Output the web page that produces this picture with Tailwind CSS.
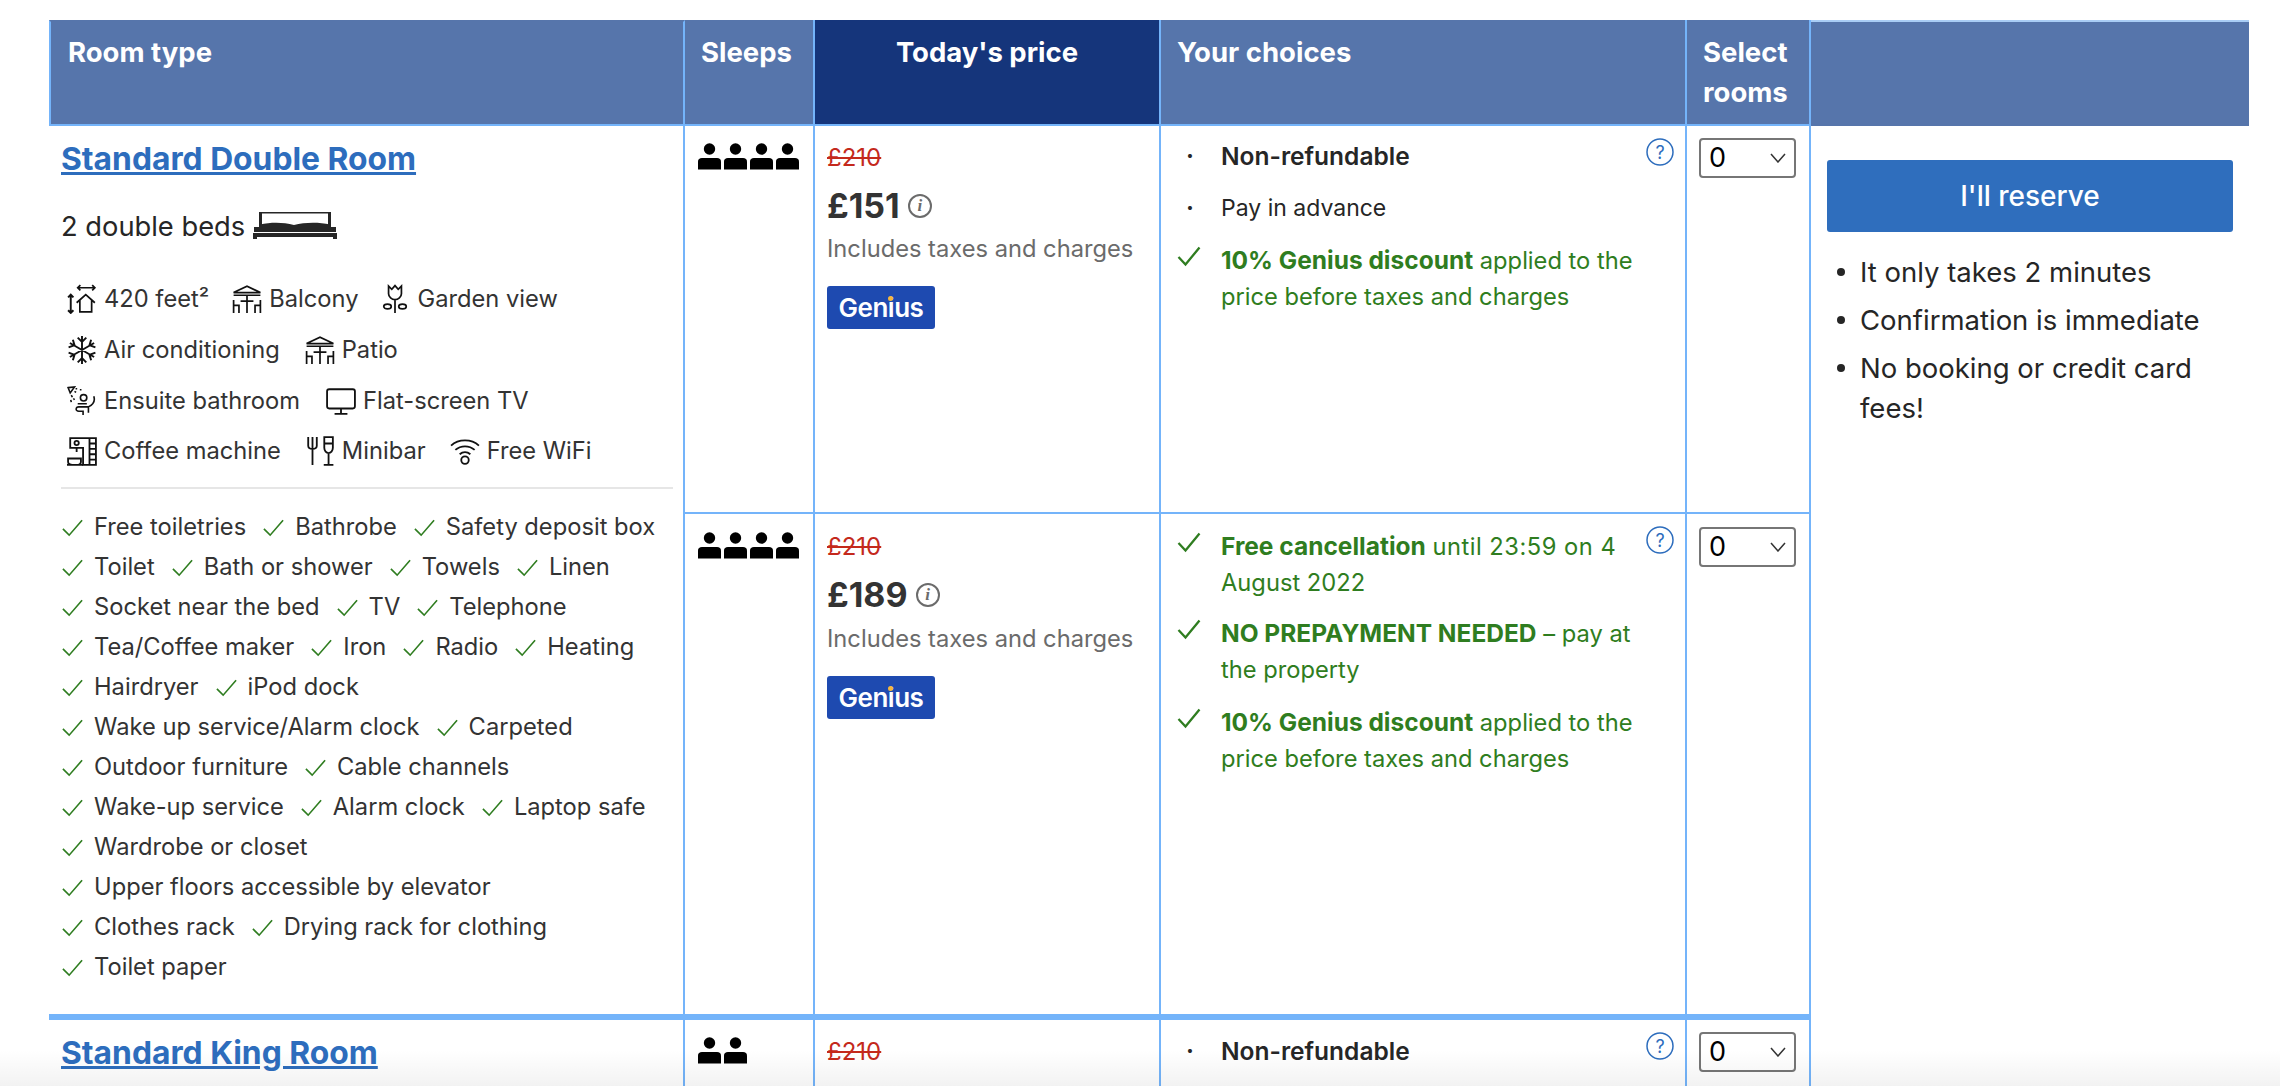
<!doctype html>
<html lang="en">
<head>
<meta charset="utf-8">
<title>Rooms</title>
<script src="https://cdn.jsdelivr.net/npm/@tailwindcss/browser@4"></script>
</head>
<body class="bg-white">
<svg width="0" height="0" class="absolute">
  <defs>
    <symbol id="check" viewBox="0 0 24 24"><path d="M2 13.5 L8.5 20 L22 4.5" fill="none" stroke="currentColor" stroke-width="1.7"/></symbol>
    <symbol id="check-b" viewBox="0 0 24 24"><path d="M1.500 13 L8.500 20.500 L22.500 3.500" fill="none" stroke="currentColor" stroke-width="2.300"/></symbol>
    <symbol id="person" viewBox="0 0 23 27"><circle cx="11.5" cy="6" r="5.7" fill="currentColor"/><path d="M0 18.5C0 16.5 1.5 15 4 15H19C21.5 15 23 16.5 23 18.5V26.5H0Z" fill="currentColor"/></symbol>
    <symbol id="size" viewBox="0 0 28 28" fill="none" stroke="#111" stroke-width="1.6"><path d="M10 3.5H26M12.500 1 10 3.500 12.500 6M23.500 1 26 3.500 23.500 6"/><path d="M3.500 10V27M1 12.500 3.500 10 6 12.500M1 24.500 3.500 27 6 24.500" stroke-width="1.800"/><path d="M9 17.500 17.500 10 26 17.500M12 15.500V26H23V15.500"/></symbol>
    <symbol id="patio" viewBox="0 0 28 28" fill="none" stroke="#111" stroke-width="1.600"><path d="M1.500 8 14 2 26.500 8ZM1.500 10.500H26.500M14 10.500V27M8 16H20M1.500 15V27M1.500 20H6.500V27M26.500 15V27M26.500 20H21.500V27"/></symbol>
    <symbol id="flower" viewBox="0 0 24 28" fill="none" stroke="#111" stroke-width="1.600"><path d="M6 2 9 5 12 1.500 15 5 18 2V9C18 12 15 14.500 12 14.500S6 12 6 9ZM12 14.500V27"/><ellipse cx="5" cy="21" rx="3.500" ry="2.200"/><ellipse cx="19" cy="21" rx="3.500" ry="2.200"/></symbol>
    <symbol id="snow" viewBox="0 0 28 28" fill="none" stroke="#111" stroke-width="1.800"><path d="M14 1V27M2.700 7.500 25.300 20.500M25.300 7.500 2.700 20.500M10 2.500 14 6.500 18 2.500M10 25.500 14 21.500 18 25.500M1.500 11.500 7 9.500 5.500 4.500M26.500 11.500 21 9.500 22.500 4.500M1.500 16.500 7 18.500 5.500 23.500M26.500 16.500 21 18.500 22.500 23.500"/></symbol>
    <symbol id="shower" viewBox="0 0 28 28" fill="none" stroke="#111" stroke-width="1.500"><path d="M1 1.500 7 1 3 6.500Z"/><path d="M8 2.500H9.500M12 3.500H13.500M7 5 8.500 6M4 8.500 5 10.500M3.500 13 4 15M6 11.500 7 13"/><circle cx="15.500" cy="11" r="3"/><path d="M25 9.500C26.500 14 24 17.500 20 19.500V25M20 19.500H11C8 19.500 7.500 23.500 11 23.500H15V27M10 16.500H18.500"/></symbol>
    <symbol id="tv" viewBox="0 0 28 28" fill="none" stroke="#111" stroke-width="1.700"><rect x="1" y="3" width="26" height="18" rx="2"/><path d="M14 21V26M8 26H20"/></symbol>
    <symbol id="coffee" viewBox="0 0 28 28" fill="none" stroke="#111" stroke-width="1.700"><path d="M3 2H27V27H15V11H3ZM3 2V11M21 7H27M21 12H27M21 17H27M21 22H27M21 2V27"/><circle cx="9" cy="6.500" r="2"/><path d="M9 11V15M1 21H13V24C13 26 11 27 9 27H5C3 27 1 26 1 24Z M0 27H15"/></symbol>
    <symbol id="minibar" viewBox="0 0 28 28" fill="none" stroke="#111" stroke-width="1.700"><path d="M3 1V9C3 11 5 12 7 12V27M7 1V12M11 1V9C11 11 9 12 7 12"/><path d="M18 1H26V11C26 14 24 16 22 16S18 14 18 11ZM18 7H26M22 16V27M17.500 27H26.500"/></symbol>
    <symbol id="wifi" viewBox="0 0 28 28" fill="none" stroke="#111" stroke-width="1.700"><path d="M1 9C8 2.500 20 2.500 27 9M5 13C10 8.500 18 8.500 23 13M9 17C12 14.500 16 14.500 19 17"/><circle cx="14" cy="22.500" r="3.500"/></symbol>
    <symbol id="bed" viewBox="0 0 84 28"><path d="M6 1H78V2.500H6ZM6 1H9V16H6ZM75 1H78V16H75Z" fill="#262626"/><path d="M7 13.500C18 11 30 11 41 14C52 11 66 11 77 13.500V18H7Z" fill="#262626"/><path d="M1 16H83V21H1Z" fill="#262626"/><path d="M0 22H84V28H80V26H4V28H0Z" fill="#262626"/></symbol>
  </defs>
</svg>

<div class="relative h-[1086px] overflow-hidden pt-[20px] pl-[49px] font-['Inter',sans-serif] text-[#262626] text-[23.700px] leading-[36px]">
  <table class="w-[2200px] table-fixed border-separate border-spacing-0">
    <colgroup>
      <col class="w-[636px]"><col class="w-[130px]"><col class="w-[346px]"><col class="w-[526px]"><col class="w-[124px]"><col class="w-[438px]">
    </colgroup>
    <thead>
      <tr class="h-[106px] text-white text-[27.500px] leading-[40px] font-bold text-left align-top">
        <th class="bg-[#5675ab] border-l-2 border-r-2 border-b-2 border-t-2 border-[#74b4fa] border-t-[#5675ab] pl-[17px] pt-[10px] font-bold">Room type</th>
        <th class="bg-[#5675ab] border-r-2 border-b-2 border-[#74b4fa] pl-[16px] pt-[12px] font-bold">Sleeps</th>
        <th class="bg-[#15357b] border-r-2 border-b-2 border-[#74b4fa] text-center pt-[12px] font-bold">Today's price</th>
        <th class="bg-[#5675ab] border-r-2 border-b-2 border-[#74b4fa] pl-[16px] pt-[12px] font-bold">Your choices</th>
        <th class="bg-[#5675ab] border-r-2 border-b-2 border-[#74b4fa] pl-[16px] pt-[12px] font-bold">Select rooms</th>
        <th class="bg-[#5675ab] border-t-2 border-[#a9cdf5]"></th>
      </tr>
    </thead>
    <tbody class="align-top">
      <tr class="h-[388px]">
        <td rowspan="2" class="border-r-2 border-[#74b4fa] pl-[12px] pr-[10px] pt-[15px]">
          <a href="#" class="block text-[31.800px] leading-[36px] font-bold text-[#2d6dbd] underline">Standard Double Room</a>
          <div class="mt-[30px] flex items-center gap-[8px] text-[27.300px] leading-[40px] pb-[2px]">
            <span>2 double beds</span>
            <svg class="w-[84px] h-[28px] -mt-[5px]"><use href="#bed"/></svg>
          </div>
          <div class="mt-[30px] flex flex-col gap-[10.800px] pl-[6px] text-[#333] leading-[40px]">
            <div class="flex gap-[23px]">
              <span class="flex items-center gap-[7px]"><svg class="w-[30px] h-[30px]"><use href="#size"/></svg>420 feet²</span>
              <span class="flex items-center gap-[7px]"><svg class="w-[30px] h-[30px]"><use href="#patio"/></svg>Balcony</span>
              <span class="flex items-center gap-[10px]"><svg class="w-[26px] h-[30px]"><use href="#flower"/></svg>Garden view</span>
            </div>
            <div class="flex gap-[25px]">
              <span class="flex items-center gap-[7px]"><svg class="w-[30px] h-[30px]"><use href="#snow"/></svg>Air conditioning</span>
              <span class="flex items-center gap-[7px]"><svg class="w-[30px] h-[30px]"><use href="#patio"/></svg>Patio</span>
            </div>
            <div class="flex gap-[26px]">
              <span class="flex items-center gap-[7px]"><svg class="w-[30px] h-[30px]"><use href="#shower"/></svg>Ensuite bathroom</span>
              <span class="flex items-center gap-[7px]"><svg class="w-[30px] h-[30px]"><use href="#tv"/></svg>Flat-screen TV</span>
            </div>
            <div class="flex gap-[24px]">
              <span class="flex items-center gap-[7px]"><svg class="w-[30px] h-[30px]"><use href="#coffee"/></svg>Coffee machine</span>
              <span class="flex items-center gap-[7px]"><svg class="w-[30px] h-[30px]"><use href="#minibar"/></svg>Minibar</span>
              <span class="flex items-center gap-[7px]"><svg class="w-[30px] h-[30px]"><use href="#wifi"/></svg>Free WiFi</span>
            </div>
          </div>
          <div class="mt-[16px] h-[2px] bg-[#e6e6e6]"></div>
          <div class="mt-[18px] flex flex-col text-[#333] leading-[40px]">
            <div class="flex gap-[16px]"><span class="flex items-center gap-[10px]"><svg class="w-[23px] h-[23px] text-[#2f7d20]"><use href="#check"/></svg>Free toiletries</span><span class="flex items-center gap-[10px]"><svg class="w-[23px] h-[23px] text-[#2f7d20]"><use href="#check"/></svg>Bathrobe</span><span class="flex items-center gap-[10px]"><svg class="w-[23px] h-[23px] text-[#2f7d20]"><use href="#check"/></svg>Safety deposit box</span></div>
            <div class="flex gap-[16px]"><span class="flex items-center gap-[10px]"><svg class="w-[23px] h-[23px] text-[#2f7d20]"><use href="#check"/></svg>Toilet</span><span class="flex items-center gap-[10px]"><svg class="w-[23px] h-[23px] text-[#2f7d20]"><use href="#check"/></svg>Bath or shower</span><span class="flex items-center gap-[10px]"><svg class="w-[23px] h-[23px] text-[#2f7d20]"><use href="#check"/></svg>Towels</span><span class="flex items-center gap-[10px]"><svg class="w-[23px] h-[23px] text-[#2f7d20]"><use href="#check"/></svg>Linen</span></div>
            <div class="flex gap-[16px]"><span class="flex items-center gap-[10px]"><svg class="w-[23px] h-[23px] text-[#2f7d20]"><use href="#check"/></svg>Socket near the bed</span><span class="flex items-center gap-[10px]"><svg class="w-[23px] h-[23px] text-[#2f7d20]"><use href="#check"/></svg>TV</span><span class="flex items-center gap-[10px]"><svg class="w-[23px] h-[23px] text-[#2f7d20]"><use href="#check"/></svg>Telephone</span></div>
            <div class="flex gap-[16px]"><span class="flex items-center gap-[10px]"><svg class="w-[23px] h-[23px] text-[#2f7d20]"><use href="#check"/></svg>Tea/Coffee maker</span><span class="flex items-center gap-[10px]"><svg class="w-[23px] h-[23px] text-[#2f7d20]"><use href="#check"/></svg>Iron</span><span class="flex items-center gap-[10px]"><svg class="w-[23px] h-[23px] text-[#2f7d20]"><use href="#check"/></svg>Radio</span><span class="flex items-center gap-[10px]"><svg class="w-[23px] h-[23px] text-[#2f7d20]"><use href="#check"/></svg>Heating</span></div>
            <div class="flex gap-[16px]"><span class="flex items-center gap-[10px]"><svg class="w-[23px] h-[23px] text-[#2f7d20]"><use href="#check"/></svg>Hairdryer</span><span class="flex items-center gap-[10px]"><svg class="w-[23px] h-[23px] text-[#2f7d20]"><use href="#check"/></svg>iPod dock</span></div>
            <div class="flex gap-[16px]"><span class="flex items-center gap-[10px]"><svg class="w-[23px] h-[23px] text-[#2f7d20]"><use href="#check"/></svg>Wake up service/Alarm clock</span><span class="flex items-center gap-[10px]"><svg class="w-[23px] h-[23px] text-[#2f7d20]"><use href="#check"/></svg>Carpeted</span></div>
            <div class="flex gap-[16px]"><span class="flex items-center gap-[10px]"><svg class="w-[23px] h-[23px] text-[#2f7d20]"><use href="#check"/></svg>Outdoor furniture</span><span class="flex items-center gap-[10px]"><svg class="w-[23px] h-[23px] text-[#2f7d20]"><use href="#check"/></svg>Cable channels</span></div>
            <div class="flex gap-[16px]"><span class="flex items-center gap-[10px]"><svg class="w-[23px] h-[23px] text-[#2f7d20]"><use href="#check"/></svg>Wake-up service</span><span class="flex items-center gap-[10px]"><svg class="w-[23px] h-[23px] text-[#2f7d20]"><use href="#check"/></svg>Alarm clock</span><span class="flex items-center gap-[10px]"><svg class="w-[23px] h-[23px] text-[#2f7d20]"><use href="#check"/></svg>Laptop safe</span></div>
            <div class="flex gap-[16px]"><span class="flex items-center gap-[10px]"><svg class="w-[23px] h-[23px] text-[#2f7d20]"><use href="#check"/></svg>Wardrobe or closet</span></div>
            <div class="flex gap-[16px]"><span class="flex items-center gap-[10px]"><svg class="w-[23px] h-[23px] text-[#2f7d20]"><use href="#check"/></svg>Upper floors accessible by elevator</span></div>
            <div class="flex gap-[16px]"><span class="flex items-center gap-[10px]"><svg class="w-[23px] h-[23px] text-[#2f7d20]"><use href="#check"/></svg>Clothes rack</span><span class="flex items-center gap-[10px]"><svg class="w-[23px] h-[23px] text-[#2f7d20]"><use href="#check"/></svg>Drying rack for clothing</span></div>
            <div class="flex gap-[16px]"><span class="flex items-center gap-[10px]"><svg class="w-[23px] h-[23px] text-[#2f7d20]"><use href="#check"/></svg>Toilet paper</span></div>
          </div>
        </td>
        <td class="border-r-2 border-b-2 border-[#74b4fa] pl-[13px] pt-[17px]">
          <div class="flex gap-[3px] text-black"><svg class="w-[23px] h-[27px]"><use href="#person"/></svg><svg class="w-[23px] h-[27px]"><use href="#person"/></svg><svg class="w-[23px] h-[27px]"><use href="#person"/></svg><svg class="w-[23px] h-[27px]"><use href="#person"/></svg></div>
        </td>
        <td class="border-r-2 border-b-2 border-[#74b4fa] pl-[12px] pt-[14px]">
          <div class="text-[24px] text-[#c4291c] line-through leading-[36px]">£210</div>
          <div class="mt-[10px] flex items-center gap-[8px] text-[#333] text-[34px] leading-[40px] font-bold">£151<span class="flex h-[24px] w-[24px] items-center justify-center rounded-full border-2 border-[#6b6b6b] font-['Liberation_Serif',serif] text-[17px] font-bold italic text-[#6b6b6b]">i</span></div>
          <div class="mt-[5px] text-[#6b6b6b] leading-[36px]">Includes taxes and charges</div>
          <div class="relative mt-[19px] flex h-[43px] w-[108px] items-center justify-center rounded-[3px] bg-[#1e4ab0] text-[26px] font-semibold tracking-[-0.500px] text-white">Genius<span class="absolute left-[61px] top-[10px] h-[5px] w-[5px] rounded-full bg-[#f5b73d]"></span></div>
        </td>
        <td class="relative border-r-2 border-b-2 border-[#74b4fa] pt-[12px] pl-[16px]">
          <svg class="absolute right-[11px] top-[12px] w-[28px] h-[28px] text-[#2d6dbd]" viewBox="0 0 28 28"><circle cx="14" cy="14" r="13" fill="none" stroke="currentColor" stroke-width="1.500"/><text x="14" y="20.500" text-anchor="middle" font-size="18" fill="currentColor">?</text></svg>
          <div class="flex flex-col gap-[16px]">
            <div class="flex"><span class="w-[44px] shrink-0 pl-[9px] font-bold">·</span><span class="text-[24.500px] font-semibold">Non-refundable</span></div>
            <div class="flex"><span class="w-[44px] shrink-0 pl-[9px] font-bold">·</span><span class="text-[23px]">Pay in advance</span></div>
            <div class="flex text-[#2f7d20]"><svg class="w-[24px] h-[24px] mr-[20px] shrink-0 mt-[2px]"><use href="#check-b"/></svg><span class="w-[422px]"><b class="text-[24.500px] font-bold">10% Genius discount</b> applied to the price before taxes and charges</span></div>
          </div>
        </td>
        <td class="border-r-2 border-b-2 border-[#74b4fa] pl-[12px] pt-[12px]">
          <div class="relative w-[97px]"><select class="h-[40px] w-full appearance-none rounded-[4px] border-2 border-[#767676] bg-white pl-[8px] text-[27px] text-black"><option>0</option></select><svg class="pointer-events-none absolute right-[10px] top-[15px] h-[10px] w-[16px]" viewBox="0 0 16 10"><path d="M1 1 8 9 15 1" fill="none" stroke="#333" stroke-width="1.500"/></svg></div>
        </td>
        <td rowspan="3" class="pl-[16px] pr-[16px] pt-[34px]">
          <button class="h-[72px] w-[406px] rounded-[3px] bg-[#2f6ebd] text-[28px] font-medium text-white">I'll reserve</button>
          <ul class="mt-[20px] flex flex-col gap-[8px] text-[27.500px] leading-[40px]">
            <li class="relative pl-[33px]"><span class="absolute left-[10px] top-[16px] h-[8px] w-[8px] rounded-full bg-[#262626]"></span>It only takes 2 minutes</li>
            <li class="relative pl-[33px]"><span class="absolute left-[10px] top-[16px] h-[8px] w-[8px] rounded-full bg-[#262626]"></span>Confirmation is immediate</li>
            <li class="relative w-[375px] pl-[33px]"><span class="absolute left-[10px] top-[16px] h-[8px] w-[8px] rounded-full bg-[#262626]"></span>No booking or credit card fees!</li>
          </ul>
        </td>
      </tr>
      <tr class="h-[500px]">
        <td class="border-r-2 border-[#74b4fa] pl-[13px] pt-[18px]">
          <div class="flex gap-[3px] text-black"><svg class="w-[23px] h-[27px]"><use href="#person"/></svg><svg class="w-[23px] h-[27px]"><use href="#person"/></svg><svg class="w-[23px] h-[27px]"><use href="#person"/></svg><svg class="w-[23px] h-[27px]"><use href="#person"/></svg></div>
        </td>
        <td class="border-r-2 border-[#74b4fa] pl-[12px] pt-[15px]">
          <div class="text-[24px] text-[#c4291c] line-through leading-[36px]">£210</div>
          <div class="mt-[10px] flex items-center gap-[8px] text-[#333] text-[34px] leading-[40px] font-bold">£189<span class="flex h-[24px] w-[24px] items-center justify-center rounded-full border-2 border-[#6b6b6b] font-['Liberation_Serif',serif] text-[17px] font-bold italic text-[#6b6b6b]">i</span></div>
          <div class="mt-[6px] text-[#6b6b6b] leading-[36px]">Includes taxes and charges</div>
          <div class="relative mt-[19px] flex h-[43px] w-[108px] items-center justify-center rounded-[3px] bg-[#1e4ab0] text-[26px] font-semibold tracking-[-0.500px] text-white">Genius<span class="absolute left-[61px] top-[10px] h-[5px] w-[5px] rounded-full bg-[#f5b73d]"></span></div>
        </td>
        <td class="relative border-r-2 border-[#74b4fa] pt-[14px] pl-[16px]">
          <svg class="absolute right-[11px] top-[12px] w-[28px] h-[28px] text-[#2d6dbd]" viewBox="0 0 28 28"><circle cx="14" cy="14" r="13" fill="none" stroke="currentColor" stroke-width="1.500"/><text x="14" y="20.500" text-anchor="middle" font-size="18" fill="currentColor">?</text></svg>
          <div class="flex flex-col gap-[13.500px] text-[#2f7d20]">
            <div class="flex"><svg class="w-[24px] h-[24px] mr-[20px] shrink-0 mt-[2px]"><use href="#check-b"/></svg><span class="w-[410px]"><b class="text-[24.500px] font-bold">Free cancellation</b> <span class="tracking-[0.500px]">until 23:59 on 4</span> August 2022</span></div>
            <div class="flex"><svg class="w-[24px] h-[24px] mr-[20px] shrink-0 mt-[2px]"><use href="#check-b"/></svg><span class="w-[422px]"><b class="text-[24.500px] font-bold">NO PREPAYMENT NEEDED</b> – pay at the property</span></div>
            <div class="mt-[3px] flex"><svg class="w-[24px] h-[24px] mr-[20px] shrink-0 mt-[2px]"><use href="#check-b"/></svg><span class="w-[422px]"><b class="text-[24.500px] font-bold">10% Genius discount</b> applied to the price before taxes and charges</span></div>
          </div>
        </td>
        <td class="border-r-2 border-[#74b4fa] pl-[12px] pt-[13px]">
          <div class="relative w-[97px]"><select class="h-[40px] w-full appearance-none rounded-[4px] border-2 border-[#767676] bg-white pl-[8px] text-[27px] text-black"><option>0</option></select><svg class="pointer-events-none absolute right-[10px] top-[15px] h-[10px] w-[16px]" viewBox="0 0 16 10"><path d="M1 1 8 9 15 1" fill="none" stroke="#333" stroke-width="1.500"/></svg></div>
        </td>
      </tr>
      <tr class="h-[300px]">
        <td class="border-t-[6px] border-r-2 border-[#74b4fa] pl-[12px] pr-[10px] pt-[15px]">
          <a href="#" class="block text-[31.800px] leading-[36px] font-bold text-[#2d6dbd] underline">Standard King Room</a>
        </td>
        <td class="border-t-[6px] border-r-2 border-[#74b4fa] pl-[13px] pt-[17px]">
          <div class="flex gap-[3px] text-black"><svg class="w-[23px] h-[27px]"><use href="#person"/></svg><svg class="w-[23px] h-[27px]"><use href="#person"/></svg></div>
        </td>
        <td class="border-t-[6px] border-r-2 border-[#74b4fa] pl-[12px] pt-[14px]">
          <div class="text-[24px] text-[#c4291c] line-through leading-[36px]">£210</div>
        </td>
        <td class="relative border-t-[6px] border-r-2 border-[#74b4fa] pt-[13px] pl-[16px]">
          <svg class="absolute right-[11px] top-[12px] w-[28px] h-[28px] text-[#2d6dbd]" viewBox="0 0 28 28"><circle cx="14" cy="14" r="13" fill="none" stroke="currentColor" stroke-width="1.500"/><text x="14" y="20.500" text-anchor="middle" font-size="18" fill="currentColor">?</text></svg>
          <div class="flex"><span class="w-[44px] shrink-0 pl-[9px] font-bold">·</span><span class="text-[24.500px] font-semibold">Non-refundable</span></div>
        </td>
        <td class="border-t-[6px] border-r-2 border-[#74b4fa] pl-[12px] pt-[12px]">
          <div class="relative w-[97px]"><select class="h-[40px] w-full appearance-none rounded-[4px] border-2 border-[#767676] bg-white pl-[8px] text-[27px] text-black"><option>0</option></select><svg class="pointer-events-none absolute right-[10px] top-[15px] h-[10px] w-[16px]" viewBox="0 0 16 10"><path d="M1 1 8 9 15 1" fill="none" stroke="#333" stroke-width="1.500"/></svg></div>
        </td>
      </tr>
    </tbody>
  </table>
  <div class="pointer-events-none absolute inset-x-0 bottom-0 h-[36px] bg-linear-to-b from-transparent to-black/5"></div>
</div>
</body>
</html>
